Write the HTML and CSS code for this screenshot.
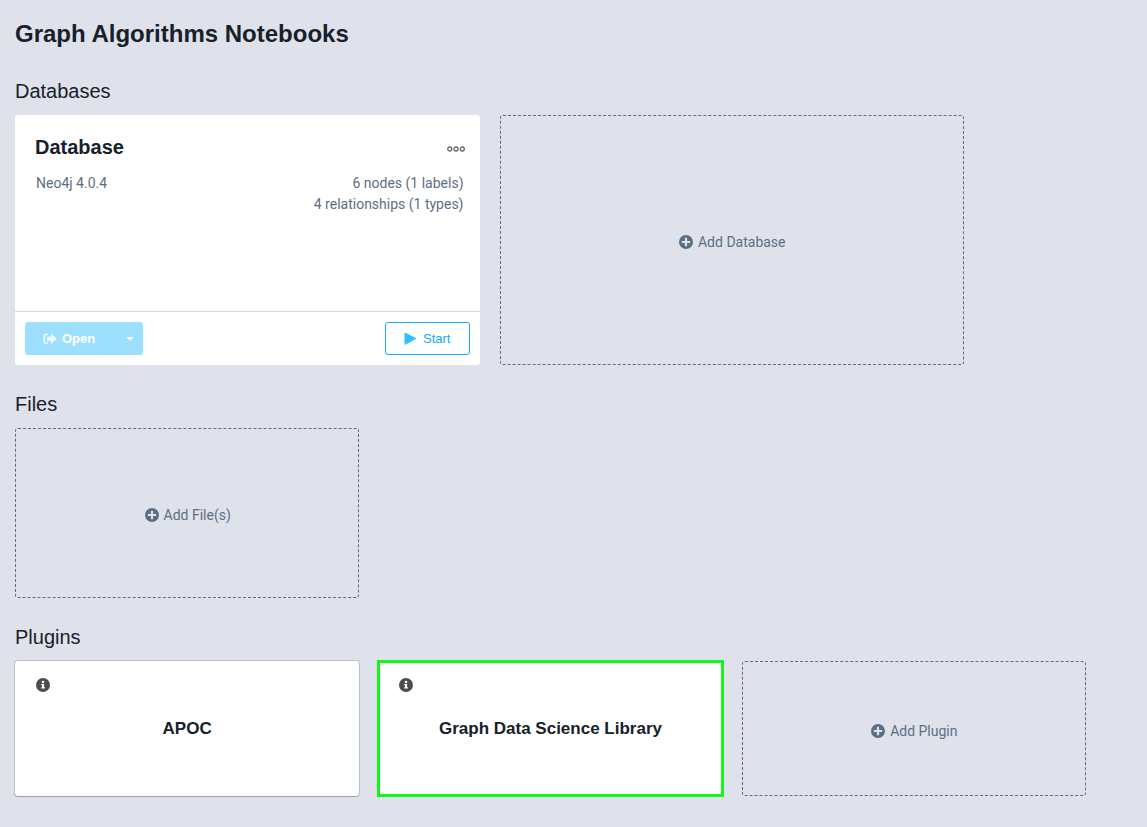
FILE: index.html
```html
<!DOCTYPE html>
<html lang="en">
<head>
<meta charset="utf-8">
<title>Graph Algorithms Notebooks</title>
<link rel="stylesheet" href="styles.css">
</head>
<body>
<svg class="sprite" aria-hidden="true">
  <symbol id="plus" viewBox="0 0 14 14"><path fill="currentColor" fill-rule="evenodd" d="M7 0a7 7 0 1 0 0 14A7 7 0 0 0 7 0ZM6.300 2.800h1.400q.4 0 .4.400v2.700h2.700q.4 0 .4.400v1.400q0 .4-.4.400H8.100v2.700q0 .4-.4.400H6.300q-.4 0-.4-.4V8.100H3.200q-.4 0-.4-.4V6.300q0-.4.4-.4h2.700V3.200q0-.4.4-.4Z"/></symbol>
  <symbol id="info" viewBox="0 0 14 14"><circle cx="7" cy="7" r="7" fill="currentColor"/><circle cx="7" cy="4" r="1.300" fill="#fff"/><path fill="#fff" d="M5.200 6h2.900v3.300h.8v1.300H5.200V9.300H6v-2h-.8Z"/></symbol>
</svg>
<main class="project">
  <h1 class="project-title">Graph Algorithms Notebooks</h1>

  <section class="section">
    <h2 class="section-title">Databases</h2>
    <div class="grid grid-databases">
      <article class="database">
        <div class="database-body">
          <div class="database-head">
            <h3 class="database-name">Database</h3>
            <button class="icon-button" type="button" aria-label="More options">
              <svg width="18" height="6" viewBox="0 0 18 6" fill="none" stroke="#666" stroke-width="1.300"><circle cx="2.700" cy="3" r="2"/><circle cx="9" cy="3" r="2"/><circle cx="15.300" cy="3" r="2"/></svg>
            </button>
          </div>
          <div class="database-info">
            <span>Neo4j 4.0.4</span>
            <div class="database-stats">
              <div>6 nodes (1 labels)</div>
              <div>4 relationships (1 types)</div>
            </div>
          </div>
        </div>
        <div class="database-actions">
          <div class="split">
            <button class="button button-open" type="button" disabled>
              <svg width="14" height="12" viewBox="0 0 14 12"><path d="M5 1.500H3Q1.200 1.500 1.200 3.300v4.900Q1.200 10 3 10h2" fill="none" stroke="currentColor" stroke-width="1.700"/><path fill="currentColor" d="M4.500 3.700h3.400V1.300q0-1 .8-.4l4.500 4.300q.5.500 0 1L8.700 10.500q-.8.600-.8-.4V7.800H4.500q-.6 0-.6-.6V4.300q0-.6.6-.6Z"/></svg>
              Open
            </button>
            <button class="button button-caret" type="button" aria-label="Open with" disabled>
              <svg width="8" height="4" viewBox="0 0 8 4"><path fill="#fff" d="M.3 0h7.400L4 4Z"/></svg>
            </button>
          </div>
          <button class="button button-start" type="button">
            <svg width="14" height="14" viewBox="0 0 14 14"><path fill="#30bdff" stroke="#30bdff" stroke-linejoin="round" d="M2 1.100L12.700 6.500L2 12.400Z"/></svg>
            Start
          </button>
        </div>
      </article>
      <button class="add" type="button"><svg width="14" height="14"><use href="#plus"/></svg>Add Database</button>
    </div>
  </section>

  <section class="section">
    <h2 class="section-title">Files</h2>
    <div class="grid grid-files">
      <button class="add" type="button"><svg width="14" height="14"><use href="#plus"/></svg>Add File(s)</button>
    </div>
  </section>

  <section class="section">
    <h2 class="section-title">Plugins</h2>
    <div class="grid grid-plugins">
      <article class="plugin">
        <button class="icon-button" type="button" aria-label="About APOC"><svg width="14" height="14"><use href="#info"/></svg></button>
        <h3 class="plugin-name">APOC</h3>
      </article>
      <article class="plugin plugin-selected">
        <button class="icon-button" type="button" aria-label="About Graph Data Science Library"><svg width="14" height="14"><use href="#info"/></svg></button>
        <h3 class="plugin-name">Graph Data Science Library</h3>
      </article>
      <button class="add add-plugin" type="button"><svg width="14" height="14"><use href="#plus"/></svg>Add Plugin</button>
    </div>
  </section>
</main>
</body>
</html>
```
FILE: styles.css
```css
* { box-sizing: border-box; }

body {
  margin: 0;
  background: #e0e2eb;
  color: #16212a;
  font-family: "Liberation Sans", Arial, sans-serif;
}

h1, h2, h3 { margin: 0; }
svg { display: block; flex: none; }
button { font: inherit; cursor: pointer; }
button:disabled { cursor: default; }
.sprite { display: none; }

.project { padding: 20px 15px 4px; }
.project-title { font-size: 24px; line-height: 28px; margin-bottom: 31px; }

.section { margin-bottom: 27px; }
.section-title { font-size: 20px; font-weight: 400; line-height: 24px; margin-bottom: 12px; }

.grid { display: grid; gap: 19px; max-width: 1071px; }
.grid-databases {
  grid-template-columns: repeat(2, 1fr);
  grid-auto-rows: minmax(250px, auto);
  gap: 20px;
  max-width: 949px;
}
.grid-files { grid-template-columns: repeat(3, 1fr); grid-auto-rows: minmax(170px, auto); }
.grid-plugins { grid-template-columns: repeat(3, 1fr); grid-auto-rows: minmax(135px, auto); }

.add {
  display: flex;
  align-items: center;
  justify-content: center;
  gap: 5px;
  padding: 4px 0 0 1px;
  border: 1px dashed #586e85;
  border-radius: 3px;
  background: none;
  color: #5b6f83;
  font-family: Roboto, sans-serif;
  font-size: 14px;
  line-height: 20px;
}
.add-plugin { padding-top: 5px; }

.icon-button { display: block; padding: 0; border: 0; background: none; color: #4d4d4d; }

.database { display: flex; flex-direction: column; border-radius: 3px; background: #fff; }
.database-body { flex: 1; padding: 20px 15px 20px 20px; }
.database-head { display: flex; align-items: center; justify-content: space-between; margin-bottom: 14px; }
.database-head .icon-button { padding-top: 4px; }
.database-name { font-size: 20px; line-height: 24px; }
.database-info {
  display: flex;
  justify-content: space-between;
  padding: 0 1px;
  color: #5b6f83;
  font-family: Roboto, sans-serif;
  font-size: 14px;
  line-height: 21px;
}
.database-stats { text-align: right; }
.database-actions {
  display: flex;
  justify-content: space-between;
  padding: 10px;
  border-top: 1px solid #d8dadd;
}

.split { display: flex; overflow: hidden; border-radius: 3px; background: #9cdfff; color: #fff; }
.button {
  display: flex;
  align-items: center;
  height: 33px;
  padding: 0;
  border: 0;
  background: none;
  color: inherit;
  font-size: 13px;
}
.button-open { gap: 5px; padding-left: 18px; width: 91px; font-weight: 700; }
.button-open svg { color: #eef9ff; }
.button-caret { justify-content: center; width: 27px; }
.button-start {
  gap: 6px;
  padding: 0 18px 0 17px;
  border: 1px solid #10aaff;
  border-radius: 3px;
  color: #10aaff;
}

.plugin {
  padding: 17px 21px;
  border-radius: 3px;
  background: #fff;
  box-shadow: 0 0 0 1px rgba(16, 22, 26, 0.15), 0 1px 1px rgba(16, 22, 26, 0.2);
}
.plugin-name { margin-top: 27px; text-align: center; font-size: 17px; line-height: 20px; }
.plugin-selected { border-radius: 0; outline: 3px solid #12f71a; outline-offset: -2px; box-shadow: none; }
```
